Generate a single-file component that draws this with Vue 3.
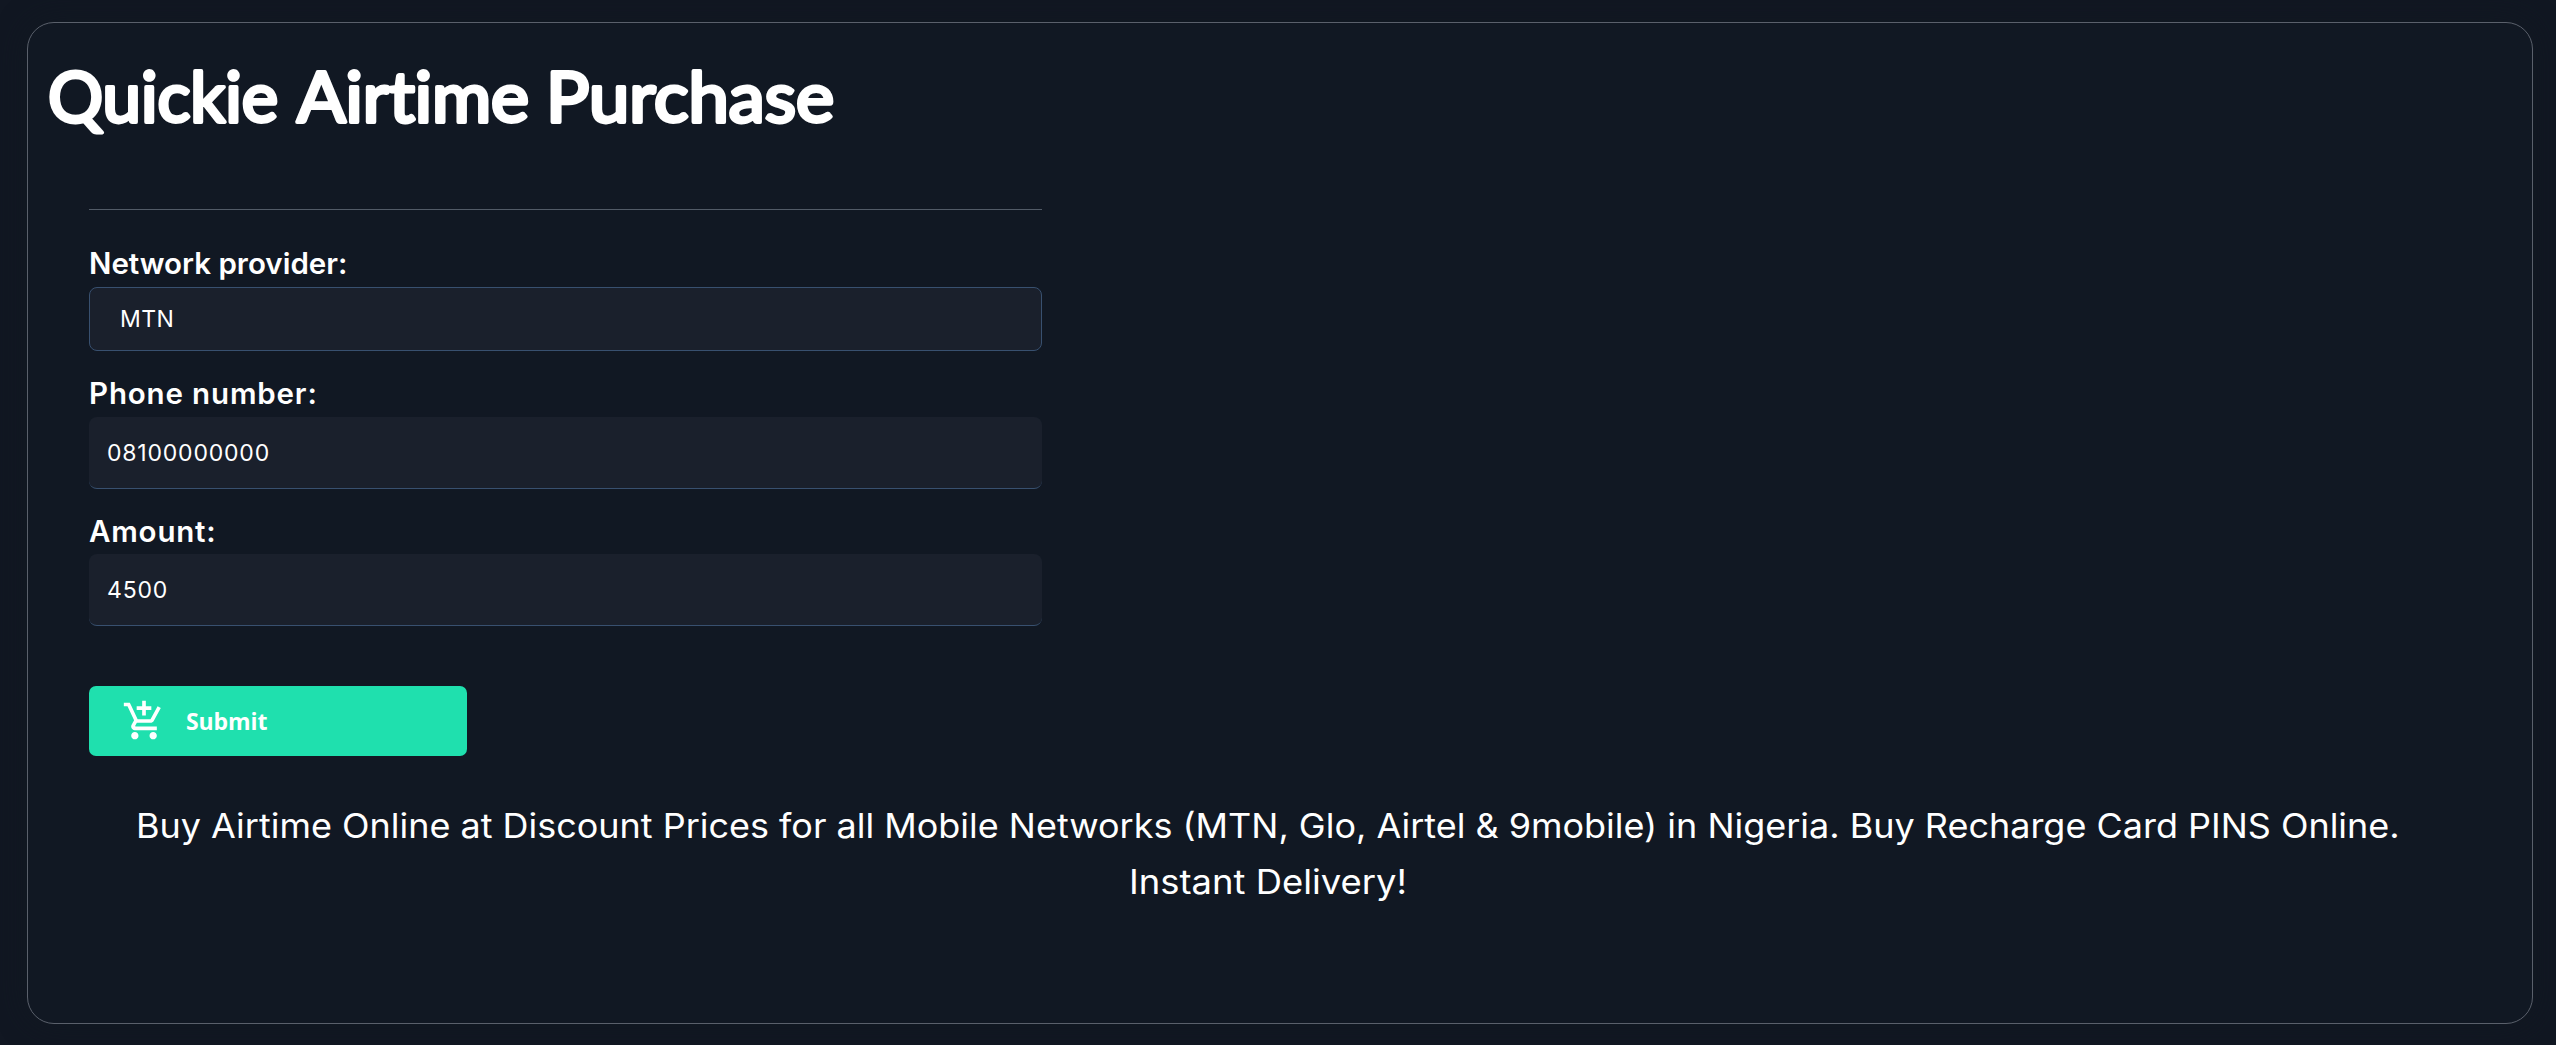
<script setup>
import { ref } from 'vue'

const provider = ref('MTN')
const phone = ref('08100000000')
const amount = ref('4500')
</script>

<template>
  <main class="page">
    <section class="card">
      <h1 class="title">
        <svg width="820" height="100" viewBox="0 0 820 100">
          <text y="77">
            <tspan x="2" textLength="230" lengthAdjust="spacingAndGlyphs">Quickie</tspan>
            <tspan x="251" textLength="232" lengthAdjust="spacingAndGlyphs">Airtime</tspan>
            <tspan x="500" textLength="288" lengthAdjust="spacingAndGlyphs">Purchase</tspan>
          </text>
        </svg>
      </h1>
      <form class="form" @submit.prevent>
        <div class="rule"></div>
        <label class="label net" for="network">Network provider:</label>
        <div id="network" class="select"><span>{{ provider }}</span></div>
        <label class="label tel" for="phone">Phone number:</label>
        <input id="phone" v-model="phone" class="input" type="text" />
        <label class="label amt" for="amount">Amount:</label>
        <input id="amount" v-model="amount" class="input amount" type="text" />
        <button class="submit" type="submit">
          <svg class="cart" viewBox="0 0 24 24">
            <path d="M11 9h2V6h3V4h-3V1h-2v3H8v2h3v3zm-4 9c-1.1 0-1.99.9-1.99 2S5.9 22 7 22s2-.9 2-2-.9-2-2-2zm10 0c-1.1 0-1.99.9-1.99 2s.89 2 1.99 2 2-.9 2-2-.9-2-2-2zm-9.83-3.25l.03-.12.9-1.63h7.45c.75 0 1.41-.41 1.75-1.03l3.86-7.01L19.42 4h-.01l-1.1 2-2.76 5H8.53l-.13-.27L6.16 6l-.95-2-.94-2H1v2h2l3.6 7.59-1.35 2.45c-.16.28-.25.61-.25.96 0 1.1.9 2 2 2h12v-2H7.42c-.13 0-.25-.11-.25-.25z" />
          </svg>
          <span>Submit</span>
        </button>
      </form>
      <p class="blurb">
        <span class="one">Buy Airtime Online at Discount Prices for all Mobile Networks (MTN, Glo, Airtel &amp; 9mobile) in Nigeria. Buy Recharge Card PINS Online.</span>
        <span class="two">Instant Delivery!</span>
      </p>
    </section>
  </main>
</template>

<style>
body {
  background: #111722;
}
</style>

<style scoped>
* {
  box-sizing: border-box;
}
.page {
  height: 1045px;
  padding: 22px 23px 21px 27px;
  overflow: hidden;
  font-family: Inter, "Open Sans", sans-serif;
  color: #fff;
}
.card {
  height: 1002px;
  border: 1px solid #5a606b;
  border-radius: 27px;
  background: #111823;
  box-shadow: 0 0 30px rgba(17, 25, 34, 0.8);
}
.title {
  height: 186px;
  margin: 0;
  padding: 22px 0 0 18px;
}
.title svg {
  display: block;
  overflow: visible;
}
.title text {
  font: 400 69px Lato, sans-serif;
  font-variant-ligatures: none;
  fill: #fff;
  stroke: #fff;
  stroke-width: 3.8px;
  stroke-linejoin: round;
}
.form {
  width: 953px;
  margin-left: 61px;
  display: flex;
  flex-direction: column;
}
.rule {
  height: 1px;
  background: #525b67;
}
.label {
  height: 66px;
  padding-top: 22px;
  font-size: 29.5px;
  font-weight: 600;
  line-height: 40px;
  white-space: nowrap;
}
.label.net {
  height: 77px;
  padding-top: 33px;
}
.label.tel {
  letter-spacing: 0.85px;
}
.label.amt {
  height: 65px;
  letter-spacing: 0.8px;
}
.select,
.input {
  width: 953px;
  border: 1px solid #38506f;
  border-radius: 8px;
  background: #1a202c;
  color: #fff;
  font-family: Inter, "Open Sans", sans-serif;
  font-size: 23px;
  letter-spacing: 0.8px;
}
.select {
  height: 64px;
  padding-left: 30px;
  line-height: 62px;
  letter-spacing: 0.4px;
}
.input {
  height: 72px;
  padding: 1px 18px 0;
  border-width: 0 0 1px;
  outline: 0;
}
.submit {
  width: 378px;
  height: 70px;
  margin-top: 60px;
  padding: 0 33px;
  display: flex;
  align-items: center;
  gap: 20px;
  border: 0;
  border-radius: 7px;
  background: #1fe0ae;
  color: #fff;
  font: 700 23px "Open Sans", sans-serif;
  letter-spacing: -0.1px;
}
.cart {
  width: 44px;
  height: 44px;
  fill: #fff;
}
.blurb {
  margin: 42px 0 0;
  display: flex;
  flex-direction: column;
  align-items: flex-start;
  font-size: 33.4px;
  line-height: 56px;
}
.blurb span {
  white-space: nowrap;
  transform-origin: 0 50%;
}
.one {
  margin-left: 108px;
  transform: scaleX(1.077);
}
.two {
  margin-left: 1101px;
  transform: scaleX(1.09);
}
</style>
